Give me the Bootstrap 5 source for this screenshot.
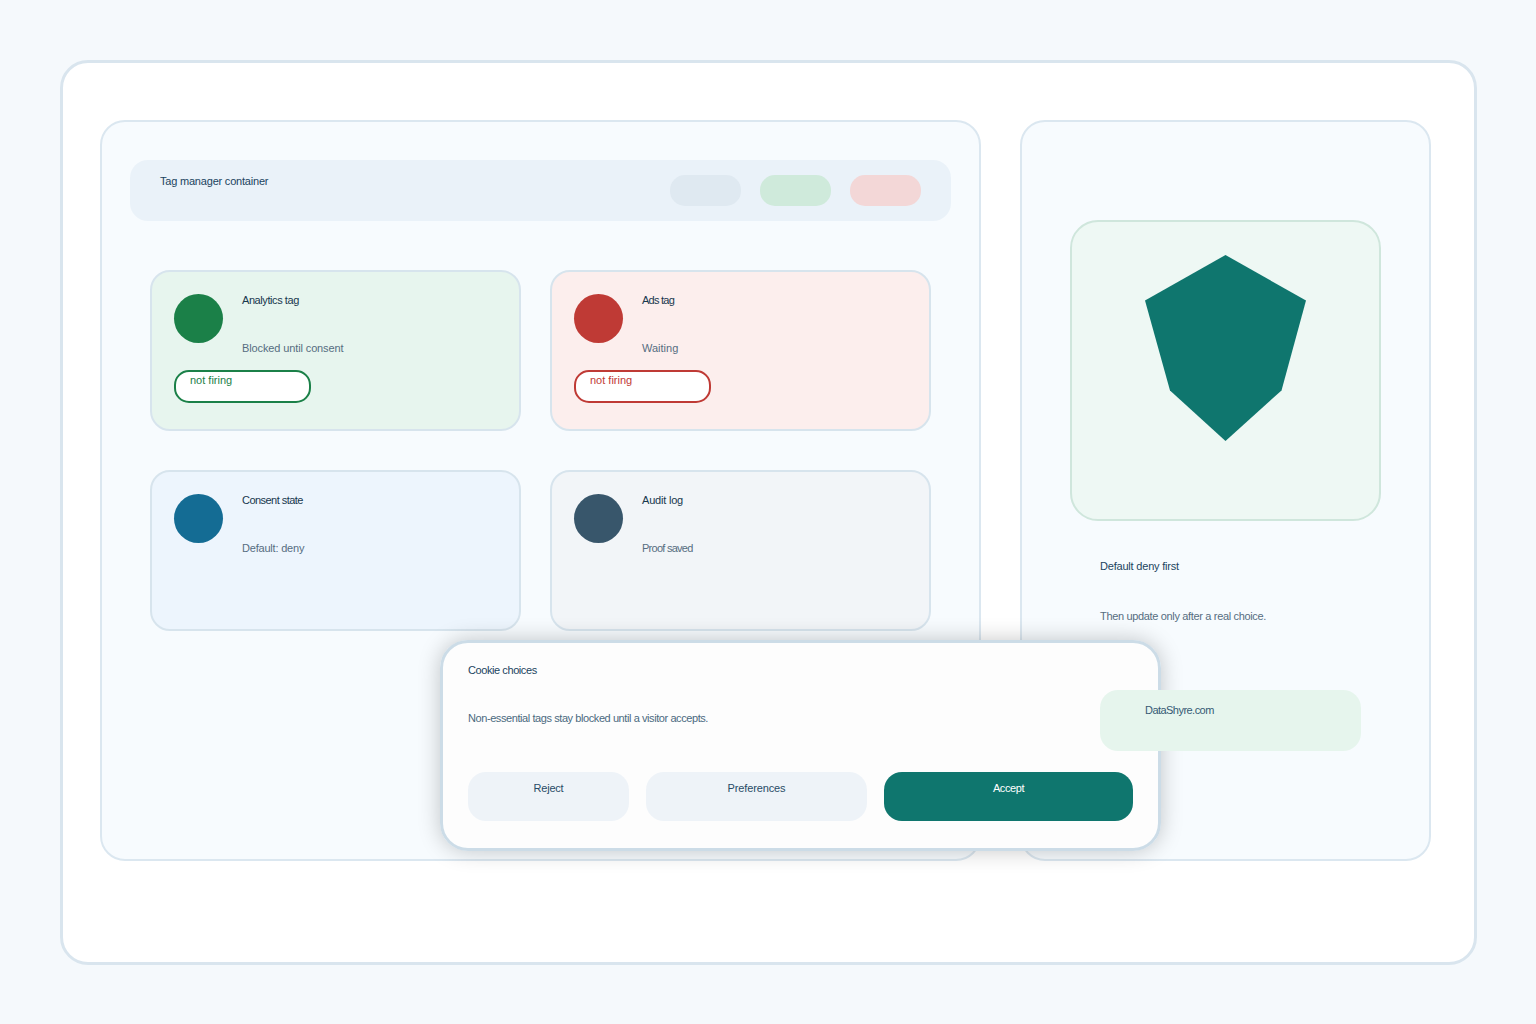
<!DOCTYPE html>
<html lang="en">
<head>
<meta charset="utf-8">
<title>Tag manager container</title>
<meta name="viewport" content="width=device-width, initial-scale=1">
<link href="https://cdn.jsdelivr.net/npm/bootstrap@5.3.0/dist/css/bootstrap.min.css" rel="stylesheet">
<style>
body{background:#f5f9fc;font-family:"Liberation Sans",Arial,sans-serif;font-size:11px;line-height:12px;color:#1b4460;height:1024px;overflow:hidden;white-space:nowrap}
.frame{margin:60px 0 0 60px;width:1417px;height:905px;border:3px solid #d9e5ee;border-radius:28px;background:#fff;padding:57px 0 0 37px;gap:39px}
.pane{height:741px;border:2px solid #dbe7f0;border-radius:25px;background:#f7fbfe}
.pane-tags{width:881px;padding:38px 28px 0}
.pane-info{width:411px;padding:98px 0 0 48px}
.topbar{height:61px;border-radius:18px;background:#eaf2f9;padding:15px 30px 0;gap:19px}
.dot-pill{width:71px;height:31px;border-radius:15px}
.pill-gray{background:#dfe9f1}.pill-green{background:#cfeadb}.pill-red{background:#f3d7d7}
.tags{margin:49px 0 0 20px;display:grid;grid-template-columns:371px 381px;grid-auto-rows:161px;column-gap:29px;row-gap:39px}
.tag-card{border:2px solid #d7e4ed;border-radius:20px;padding:22px}
.tag-head{gap:19px}
.tag-dot{width:49px;height:49px;border-radius:50%}
.tag-title{color:#17374d;margin-bottom:36px}
.tag-note{color:#566d81}
.bg-analytics{background:#e7f5ee}.bg-ads{background:#fceeed}.bg-state{background:#edf5fd}.bg-audit{background:#f2f5f8}
.dot-analytics{background:#1b8048}.dot-ads{background:#bf3a35}.dot-state{background:#146c94}.dot-audit{background:#38566b}
.tag-status{width:137px;height:33px;border:2px solid;border-radius:15px;background:#fff;padding:2px 0 0 14px;margin-top:16px}
.status-green{color:#1b8048}.status-red{color:#bf3a35}
.shield-box{width:311px;height:301px;border:2px solid #cfe6dc;border-radius:28px;background:#eef8f4;padding:33px 0 0 73px}
.info-title{margin:39px 0 0 30px}
.info-note{margin:38px 0 0 30px;color:#566d81}
.brand-chip{margin:68px 0 0 30px;width:261px;height:61px;border-radius:18px;background:#e6f5ed;color:#355a74;padding:14px 45px;z-index:3}
.cookie{left:440px;top:640px;width:721px;height:211px;border:3px solid #ccdce7;border-radius:28px;background:rgba(253,253,253,.985);background-clip:padding-box;box-shadow:0 0 22px rgba(0,0,0,.22);padding:21px 25px;z-index:2}
.cookie-note{color:#4b6a80;margin-top:36px}
.choices{gap:17px;margin-top:48px}
.choice{height:49px;border:0;border-radius:18px;padding:10px 0 0;font-size:11px;line-height:12px;background:#eef3f8;color:#294b66;display:flex;justify-content:center;align-items:flex-start}
.choice:hover{background:#e4edf4}
.choice-accept,.choice-accept:hover{background:#0f766e;color:#fff}
.w-reject{width:161px}.w-pref{width:221px}.w-accept{width:249px}
.trk-1{letter-spacing:-.12px}.trk-2{letter-spacing:-.2px}.trk-3{letter-spacing:-.34px}.trk-4{letter-spacing:-.42px}.trk-5{letter-spacing:-.54px}.trk-7{letter-spacing:-.74px}
</style>
</head>
<body>
<main class="frame d-flex align-items-start">
  <section class="pane pane-tags">
    <header class="topbar d-flex align-items-start">
      <span class="trk-2 me-auto">Tag manager container</span>
      <span class="dot-pill pill-gray"></span>
      <span class="dot-pill pill-green"></span>
      <span class="dot-pill pill-red"></span>
    </header>
    <div class="tags">
      <article class="tag-card bg-analytics">
        <div class="tag-head d-flex">
          <span class="tag-dot dot-analytics flex-shrink-0"></span>
          <div><div class="tag-title trk-4">Analytics tag</div><div class="tag-note trk-1">Blocked until consent</div></div>
        </div>
        <div class="tag-status status-green">not firing</div>
      </article>
      <article class="tag-card bg-ads">
        <div class="tag-head d-flex">
          <span class="tag-dot dot-ads flex-shrink-0"></span>
          <div><div class="tag-title trk-7">Ads tag</div><div class="tag-note">Waiting</div></div>
        </div>
        <div class="tag-status status-red">not firing</div>
      </article>
      <article class="tag-card bg-state">
        <div class="tag-head d-flex">
          <span class="tag-dot dot-state flex-shrink-0"></span>
          <div><div class="tag-title trk-5">Consent state</div><div class="tag-note trk-2">Default: deny</div></div>
        </div>
      </article>
      <article class="tag-card bg-audit">
        <div class="tag-head d-flex">
          <span class="tag-dot dot-audit flex-shrink-0"></span>
          <div><div class="tag-title trk-2">Audit log</div><div class="tag-note trk-7">Proof saved</div></div>
        </div>
      </article>
    </div>
  </section>
  <aside class="pane pane-info">
    <div class="shield-box">
      <svg class="d-block" width="161" height="186" viewBox="0 0 161 186" aria-hidden="true"><path fill="#0f766e" d="M80.5 0 161 45.500 136.500 135.500 80.500 186 25 135.500 0 45.500Z"/></svg>
    </div>
    <div class="info-title trk-2">Default deny first</div>
    <div class="info-note trk-3">Then update only after a real choice.</div>
    <div class="brand-chip position-relative trk-5">DataShyre.com</div>
  </aside>
</main>
<div class="cookie position-absolute" role="dialog" aria-label="Cookie choices">
  <div class="trk-4">Cookie choices</div>
  <div class="cookie-note trk-4">Non-essential tags stay blocked until a visitor accepts.</div>
  <div class="choices d-flex">
    <button class="btn choice w-reject trk-2">Reject</button>
    <button class="btn choice w-pref trk-1">Preferences</button>
    <button class="btn choice choice-accept w-accept trk-4">Accept</button>
  </div>
</div>
<script src="https://cdn.jsdelivr.net/npm/bootstrap@5.3.0/dist/js/bootstrap.bundle.min.js"></script>
</body>
</html>
